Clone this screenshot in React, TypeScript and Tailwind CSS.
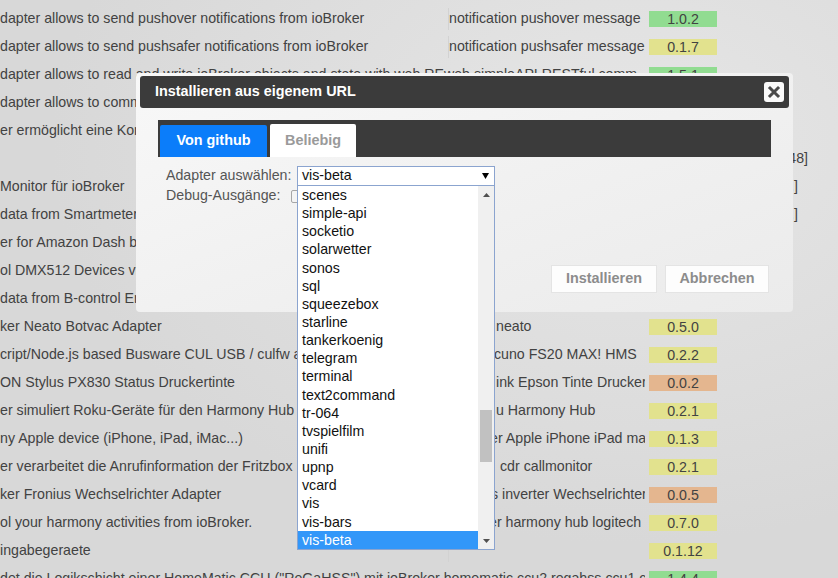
type Tone = 'green' | 'yellow' | 'orange'

interface Row {
  desc: string
  keywords?: string
  kwPad?: string
  version?: string
  tone?: Tone
  span?: boolean
  extra?: string
  extraPad?: string
}

const rows: Row[] = [
  { desc: 'dapter allows to send pushover notifications from ioBroker', keywords: 'notification pushover message', kwPad: 'pl-0', version: '1.0.2', tone: 'green' },
  { desc: 'dapter allows to send pushsafer notifications from ioBroker', keywords: 'notification pushsafer message', kwPad: 'pl-0', version: '0.1.7', tone: 'yellow' },
  { desc: 'dapter allows to read and write ioBroker objects and state with web REweb simpleAPI RESTful comm', span: true, version: '1.5.1', tone: 'green' },
  { desc: 'dapter allows to communicate with ioBroker via socket.io', keywords: 'socket.io web', kwPad: 'pl-0', version: '1.7.5', tone: 'green' },
  { desc: 'er ermöglicht eine Kommunikation mit dem Solarwetter', keywords: 'solar wetter', kwPad: 'pl-0', version: '0.1.0', tone: 'yellow' },
  { desc: '', extra: '[0.0.48]', extraPad: 'pr-0' },
  { desc: 'Monitor für ioBroker', extra: '[..]', extraPad: 'pr-[10px]' },
  { desc: 'data from Smartmeter devices', extra: '[..]', extraPad: 'pr-[10px]' },
  { desc: 'er for Amazon Dash button', keywords: 'amazon dash', kwPad: 'pl-0' },
  { desc: 'ol DMX512 Devices via Artnet', keywords: 'dmx artnet', kwPad: 'pl-0' },
  { desc: 'data from B-control Energy Manager', keywords: 'b-control energy', kwPad: 'pl-0' },
  { desc: 'ker Neato Botvac Adapter', keywords: 'neato', kwPad: 'pl-[47px]', version: '0.5.0', tone: 'yellow' },
  { desc: 'cript/Node.js based Busware CUL USB / culfw adapter', keywords: 'cuno FS20 MAX! HMS', kwPad: 'pl-[45px]', version: '0.2.2', tone: 'yellow' },
  { desc: 'ON Stylus PX830 Status Druckertinte', keywords: 'ink Epson Tinte Drucker', kwPad: 'pl-[47px]', version: '0.0.2', tone: 'orange' },
  { desc: 'er simuliert Roku-Geräte für den Harmony Hub', keywords: 'u Harmony Hub', kwPad: 'pl-[47px]', version: '0.2.1', tone: 'yellow' },
  { desc: 'ny Apple device (iPhone, iPad, iMac...)', keywords: 'er Apple iPhone iPad mac', kwPad: 'pl-[41px]', version: '0.1.3', tone: 'yellow' },
  { desc: 'er verarbeitet die Anrufinformation der Fritzbox', keywords: 'cdr callmonitor', kwPad: 'pl-[51px]', version: '0.2.1', tone: 'yellow' },
  { desc: 'ker Fronius Wechselrichter Adapter', keywords: 's inverter Wechselrichter', kwPad: 'pl-[42px]', version: '0.0.5', tone: 'orange' },
  { desc: 'ol your harmony activities from ioBroker.', keywords: 'er harmony hub logitech', kwPad: 'pl-[40px]', version: '0.7.0', tone: 'yellow' },
  { desc: 'ingabegeraete', keywords: '', kwPad: 'pl-0', version: '0.1.12', tone: 'yellow' },
  { desc: 'det die Logikschicht einer HomeMatic CCU ("ReGaHSS") mit ioBroker homematic ccu2 regahss ccu1 c', span: true, version: '1.4.4', tone: 'green' },
]

const toneClass: Record<Tone, string> = {
  green: 'bg-[#91dc91]',
  yellow: 'bg-[#e2e28e]',
  orange: 'bg-[#e4b68f]',
}

const adapters = [
  'scenes', 'simple-api', 'socketio', 'solarwetter', 'sonos', 'sql', 'squeezebox', 'starline',
  'tankerkoenig', 'telegram', 'terminal', 'text2command', 'tr-064', 'tvspielfilm', 'unifi',
  'upnp', 'vcard', 'vis', 'vis-bars', 'vis-beta',
]

function TableRow({ row }: { row: Row }) {
  return (
    <div className="flex h-[28px] items-center whitespace-nowrap">
      {row.span ? (
        <div className="w-[645px] overflow-hidden">{row.desc}</div>
      ) : (
        <>
          <div className="w-[448px] overflow-hidden">{row.desc}</div>
          <div className={`w-[197px] overflow-hidden border-l border-[#d2d2d2] ${row.kwPad ?? 'pl-0'}`}>
            {row.keywords}&nbsp;
          </div>
        </>
      )}
      <div className="w-[4px]" />
      <div className={`h-[16px] w-[68px] text-center leading-[16px] ${row.tone ? toneClass[row.tone] : ''}`}>
        {row.version}
      </div>
      <div className={`w-[91px] text-right ${row.extraPad ?? 'pr-0'}`}>{row.extra}</div>
    </div>
  )
}

function AdapterDropdown() {
  return (
    <div className="absolute left-0 top-[19px] z-20 flex h-[365px] w-[198px] border border-[#8ba4cf] bg-white">
      {/* Options */}
      <div className="flex-1 text-[#111]">
        {adapters.map(name => (
          <div
            key={name}
            className={`h-[18.15px] pl-[4px] leading-[18.15px] ${name === 'vis-beta' ? 'bg-[#3297f9] text-white' : ''}`}
          >
            {name}
          </div>
        ))}
      </div>
      {/* Scrollbar */}
      <div className="flex w-[16px] flex-col bg-[#f0f0f0]">
        <div className="flex h-[17px] items-center justify-center">
          <svg width="7" height="4" viewBox="0 0 7 4"><polygon points="3.5,0 7,4 0,4" fill="#505050" /></svg>
        </div>
        <div className="mx-[2px] mt-[207px] h-[52px] bg-[#c1c1c1]" />
        <div className="flex-1" />
        <div className="flex h-[17px] items-center justify-center">
          <svg width="7" height="4" viewBox="0 0 7 4"><polygon points="0,0 7,0 3.5,4" fill="#505050" /></svg>
        </div>
      </div>
    </div>
  )
}

function InstallDialog() {
  return (
    <div className="absolute left-[136px] top-[73px] z-10 flex h-[239px] w-[657px] flex-col rounded-[4px] bg-linear-to-br from-[#f8f8f8] via-[#f1f1f1] to-[#ebebeb] px-[4px] pt-[3px]">
      {/* Header */}
      <div className="flex h-[32px] items-center justify-between rounded-[3px] bg-[#3b3b3b] pl-[15px] pr-[5px]">
        <span className="text-[14.4px] font-bold text-white">Installieren aus eigenem URL</span>
        <button className="flex h-[20px] w-[20px] items-center justify-center rounded-[3px] bg-[#fafafa]">
          <svg width="20" height="20" viewBox="0 0 20 20">
            <path d="M6 6 L14 14 M14 6 L6 14" stroke="#4a4a4a" strokeWidth="3" strokeLinecap="square" />
          </svg>
        </button>
      </div>

      {/* Tabs */}
      <div className="mx-[18px] mt-[12px] flex h-[37px] items-end gap-[3px] bg-[#3b3b3b] pl-[2px]">
        <div className="flex h-[32px] w-[107px] items-center justify-center rounded-t-[2px] bg-[#0b7dfa] text-[14.4px] font-bold text-white">
          Von github
        </div>
        <div className="flex h-[33px] w-[86px] items-center justify-center rounded-t-[2px] bg-white text-[14.4px] font-bold text-[#9a9a9a]">
          Beliebig
        </div>
      </div>

      {/* Tab panel */}
      <div className="mx-[18px] h-[95px] pl-[8px] pt-[9px] text-[#555]">
        <div className="flex h-[20px] items-center">
          <div className="w-[131px]">Adapter auswählen:</div>
          <div className="relative">
            <div className="flex h-[20px] w-[198px] items-center justify-between border border-[#8ba4cf] bg-white pl-[4px] pr-[5px] text-[#111]">
              <span>vis-beta</span>
              <svg width="7" height="6" viewBox="0 0 7 6"><polygon points="0,0 7,0 3.5,6" fill="#000" /></svg>
            </div>
            <AdapterDropdown />
          </div>
        </div>
        <div className="flex h-[20px] items-center">
          <div className="w-[125px]">Debug-Ausgänge:</div>
          <div className="h-[13px] w-[13px] rounded-[2px] border border-[#a6a6a6] bg-[#f4f4f4]" />
        </div>
      </div>

      {/* Buttons */}
      <div className="mt-[13px] flex justify-end gap-[8px] pr-[20px]">
        <button className="h-[28px] w-[106px] border border-[#e4e4e4] bg-[#fdfdfd] text-[14.4px] font-bold text-[#8c8c8c]">
          Installieren
        </button>
        <button className="h-[28px] w-[104px] border border-[#e4e4e4] bg-[#fdfdfd] text-[14.4px] font-bold text-[#8c8c8c]">
          Abbrechen
        </button>
      </div>
    </div>
  )
}

export default function App() {
  return (
    <div className="relative h-[578px] w-[838px] overflow-hidden bg-[radial-gradient(ellipse_at_75%_25%,#e6e6e6,#d8d8d8_65%)] font-['Liberation_Sans',Arial,sans-serif] text-[14.2px] text-[#424242]">
      <div className="pt-[5px]">
        {rows.map((row, i) => (
          <TableRow key={i} row={row} />
        ))}
      </div>
      <InstallDialog />
    </div>
  )
}
